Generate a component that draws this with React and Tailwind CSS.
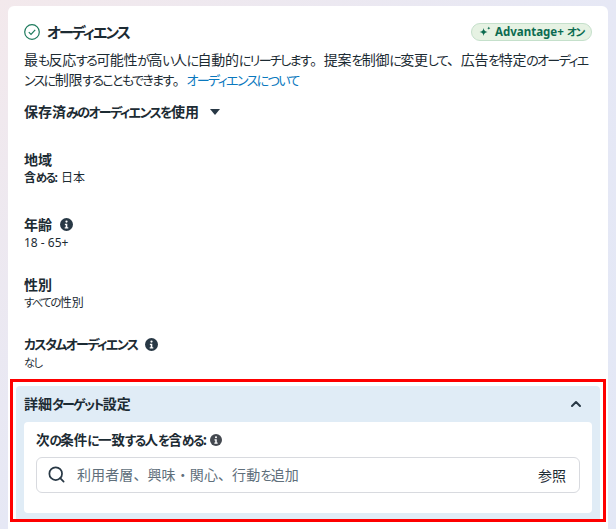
import React from "react";
import { Search, ChevronUp } from "lucide-react";

const FONT = "font-['Noto_Sans','Noto_Sans_CJK_JP',sans-serif]";

// the reference font has narrow kana next to full-width kanji, so kana runs get squeezed
function J({ children }) {
  const parts = children.split(/([\u3041-\u3096\u30a1-\u30fa\u30fc]+)/);
  return (
    <>
      {parts.map((part, i) =>
        i % 2 === 1 ? (
          <span key={i} className="text-[0.93em] tracking-[-0.125em] [font-feature-settings:'palt']">
            {part}
          </span>
        ) : (
          part
        )
      )}
    </>
  );
}

function InfoIcon({ color = "#283845", size = 13 }) {
  return (
    <svg width={size} height={size} viewBox="0 0 16 16" className="shrink-0">
      <circle cx="8" cy="8" r="8" fill={color} />
      <circle cx="8" cy="4.4" r="1.4" fill="#fff" />
      <path d="M6 7h3v4.4h1.2V13H5.8v-1.6H7V8.6H6z" fill="#fff" />
    </svg>
  );
}

function Field({ label, value, info, className }) {
  return (
    <div className={className}>
      <div className="flex items-center gap-[8px] h-[20px] text-[14px] font-bold text-[#1c2b33]">
        <span>
          <J>{label}</J>
        </span>
        {info && <InfoIcon />}
      </div>
      <div className="mt-[1px] h-[16px] text-[12px] leading-[16px] text-[#1c2b33]">{value}</div>
    </div>
  );
}

export default function App() {
  return (
    <div className={`h-[529px] w-[616px] overflow-hidden px-[8px] pt-[6px] bg-gradient-to-br from-[#f3e9ec] via-[#e6e8f5] to-[#e3e8f6] ${FONT}`}>
      <div className="h-[540px] rounded-t-[6px] bg-white">
        {/* Header */}
        <div className="px-[16px] pt-[15px]">
          <div className="flex items-center justify-between h-[22px]">
            <div className="flex items-center gap-[7px]">
              <svg width="16" height="16" viewBox="0 0 16 16" fill="none">
                <circle cx="8" cy="8" r="7.3" stroke="#1d7a5c" strokeWidth="1.2" />
                <path d="M4.8 8.2l2.2 2.2 4.2-4.6" stroke="#1d7a5c" strokeWidth="1.2" />
              </svg>
              <span className="text-[16px] font-bold text-[#1c2b33]">
                <J>オーディエンス</J>
              </span>
            </div>
            <div className="flex items-center gap-[4px] h-[18px] pl-[7px] pr-[7px] rounded-full bg-[#e6f2e3] border border-[#c5e0cb] text-[11.5px] font-bold text-[#0c6b50]">
              <svg width="12" height="12" viewBox="0 0 12 12" fill="#0c6b50">
                <path d="M4.600 2c.5 2.700 1.300 3.500 4 4-2.700.5-3.500 1.300-4 4-.5-2.700-1.300-3.500-4-4 2.700-.5 3.500-1.300 4-4z" />
                <path d="M9.800 .6c.2 1 .6 1.400 1.600 1.600-1 .2-1.400.6-1.600 1.600-.2-1-.6-1.400-1.600-1.600 1-.2 1.400-.6 1.600-1.600z" />
              </svg>
              <span>
                <J>Advantage+ オン</J>
              </span>
            </div>
          </div>
          <p className="mt-[7px] text-[14px] leading-[20px] tracking-[-0.25px] text-[#1c2b33] whitespace-nowrap">
            <J>最も反応する可能性が高い人に自動的にリーチします。提案を制御に変更して、広告を特定のオーディエ</J>
            <br />
            <J>ンスに制限することもできます。</J>
            <span className="text-[#0a78be]">
              <J>オーディエンスについて</J>
            </span>
          </p>
          <div className="mt-[12px] flex items-center gap-[11px] h-[20px] text-[14px] font-bold text-[#1c2b33]">
            <span>
              <J>保存済みのオーディエンスを使用</J>
            </span>
            <svg width="10" height="6" viewBox="0 0 10 6" fill="#283845">
              <path d="M0 0h10L5 6z" />
            </svg>
          </div>
        </div>

        {/* Fields */}
        <div className="px-[16px]">
          <Field
            className="mt-[27px]"
            label="地域"
            value={
              <>
                <span className="font-bold">
                  <J>含める:</J>
                </span>{" "}
                日本
              </>
            }
          />
          <Field className="mt-[28px]" label="年齢" value="18 - 65+" info />
          <Field className="mt-[23px]" label="性別" value={<J>すべての性別</J>} />
          <Field className="mt-[23px]" label="カスタムオーディエンス" value={<J>なし</J>} info />
        </div>

        {/* Detailed targeting, marked with a red frame */}
        <div className="mt-[8px] mx-[2px] h-[143px] border-[3px] border-[#fe0000] px-[3px] pt-[4px]">
          <div className="h-[133px] rounded-t-[4px] bg-[#e0ecf6] px-[8px]">
            <div className="flex items-center justify-between h-[36px] pr-[8px]">
              <span className="text-[14px] font-bold text-[#1c2b33]">
                <J>詳細ターゲット設定</J>
              </span>
              <ChevronUp size={16} strokeWidth={3} className="text-[#283845]" />
            </div>
            <div className="h-[91px] rounded-[4px] bg-white px-[12px] pt-[9px]">
              <div className="flex items-center gap-[3px] h-[18px] text-[13.5px] font-bold text-[#1c2b33]">
                <span>
                  <J>次の条件に一致する人を含める:</J>
                </span>
                <InfoIcon color="#444950" size={12} />
              </div>
              <div className="mt-[8px] flex items-center justify-between h-[36px] rounded-[6px] border border-[#d8dadf] pl-[10px] pr-[13px]">
                <div className="flex items-center gap-[11px]">
                  <Search size={19} strokeWidth={2.2} className="text-[#283845]" />
                  <span className="text-[14px] text-[#606f7b] tracking-[0.1px]">
                    <J>利用者層、興味・関心、行動を追加</J>
                  </span>
                </div>
                <span className="text-[14px] text-[#1c2b33]">参照</span>
              </div>
            </div>
          </div>
        </div>
      </div>
    </div>
  );
}
